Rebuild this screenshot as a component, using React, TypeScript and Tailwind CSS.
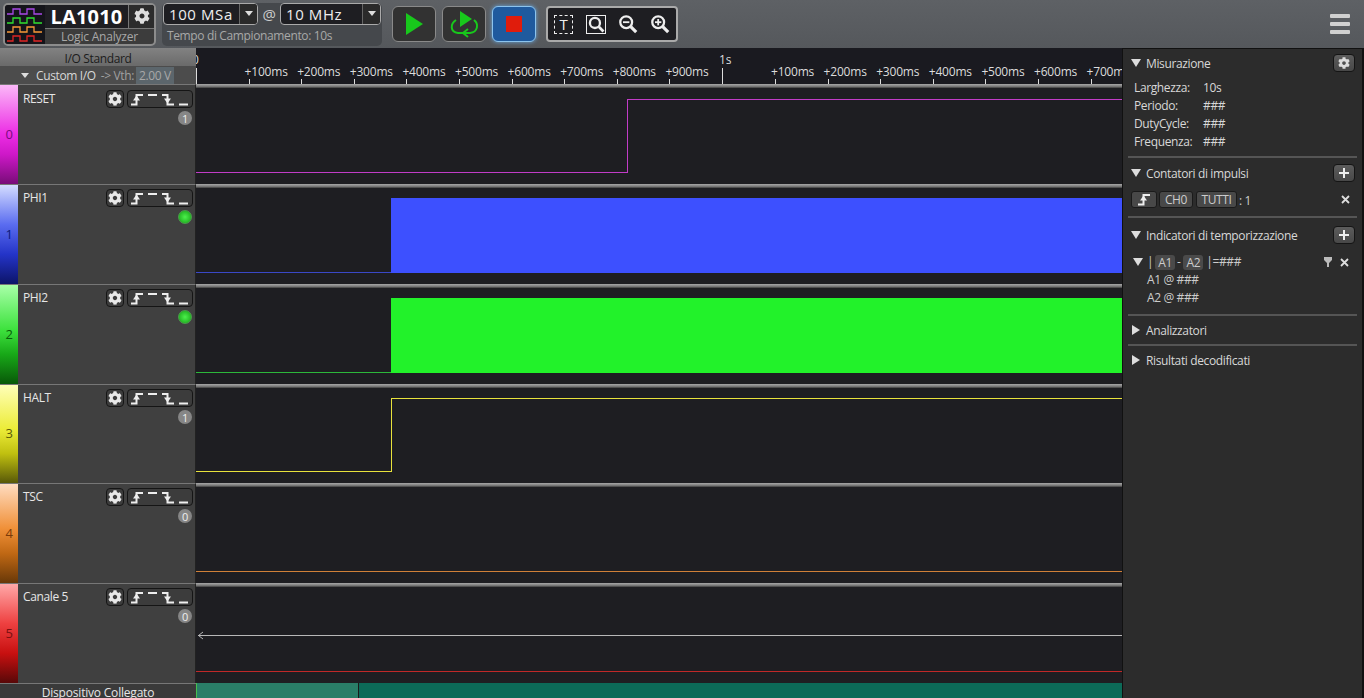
import { FaCog } from "react-icons/fa";

const ticks = [
  { x: 52.6, label: "+100ms" },
  { x: 105.2, label: "+200ms" },
  { x: 157.8, label: "+300ms" },
  { x: 210.4, label: "+400ms" },
  { x: 263, label: "+500ms" },
  { x: 315.6, label: "+600ms" },
  { x: 368.2, label: "+700ms" },
  { x: 420.8, label: "+800ms" },
  { x: 473.4, label: "+900ms" },
  { x: 579, label: "+100ms" },
  { x: 631.6, label: "+200ms" },
  { x: 684.2, label: "+300ms" },
  { x: 736.8, label: "+400ms" },
  { x: 789.4, label: "+500ms" },
  { x: 842, label: "+600ms" },
  { x: 894.6, label: "+700ms" },
];

const channels = [
  { id: 0, name: "RESET", status: "1", h: "h-[100px]", pad: "pt-[5px]", strip: "bg-[linear-gradient(#fbb8f8,#ec2ce4_50%,#ce18c8_70%,#780c78)]", num: "text-[#7a0a80]" },
  { id: 1, name: "PHI1", status: "led", h: "h-[100px]", pad: "pt-[4px]", strip: "bg-[linear-gradient(#d4dcff,#5a6cf0_40%,#2434c8_70%,#0c1468)]", num: "text-[#0c1a78]" },
  { id: 2, name: "PHI2", status: "led", h: "h-[100px]", pad: "pt-[4px]", strip: "bg-[linear-gradient(#a8ffa8,#3ee23e_45%,#18a818_70%,#085808)]", num: "text-[#086008]" },
  { id: 3, name: "HALT", status: "1", h: "h-[99px]", pad: "pt-[4px]", strip: "bg-[linear-gradient(#ffffb8,#ecec38_45%,#c0c010_70%,#585808)]", num: "text-[#5a5a08]" },
  { id: 4, name: "TSC", status: "0", h: "h-[100px]", pad: "pt-[4px]", strip: "bg-[linear-gradient(#ffdcc0,#f09038_45%,#c06814_70%,#683808)]", num: "text-[#7a3a08]" },
  { id: 5, name: "Canale 5", status: "0", h: "h-[100px]", pad: "pt-[4px]", strip: "bg-[linear-gradient(#ffa8a8,#ee4040_40%,#c81010_70%,#580808)]", num: "text-[#7a1010]" },
];

// waveforms are drawn as 1px rects so each segment lands on whole pixels
function Wave({ id }: { id: number }) {
  return (
    <svg width="926" height="96" className="block" shapeRendering="crispEdges">
      {id === 0 && (
        <g fill="#c23cc8">
          <rect x="0" y="84" width="431" height="1" />
          <rect x="431" y="11" width="1" height="74" />
          <rect x="431" y="11" width="495" height="1" />
        </g>
      )}
      {id === 1 && (
        <>
          <rect x="0" y="84" width="195" height="1" fill="#3a48c8" />
          <rect x="195" y="10" width="731" height="75" fill="#3d50ff" />
        </>
      )}
      {id === 2 && (
        <>
          <rect x="0" y="84" width="195" height="1" fill="#2cb83a" />
          <rect x="195" y="10" width="731" height="75" fill="#22f22a" />
        </>
      )}
      {id === 3 && (
        <g fill="#e8e23c">
          <rect x="0" y="83" width="195" height="1" />
          <rect x="195" y="10" width="1" height="74" />
          <rect x="195" y="10" width="731" height="1" />
        </g>
      )}
      {id === 4 && <rect x="0" y="84" width="926" height="1" fill="#d08038" />}
      {id === 5 && (
        <>
          <rect x="2" y="48" width="924" height="1" fill="#b8b8b8" />
          <path d="M7 45L2.500 48.500L7 52" fill="none" stroke="#b8b8b8" shapeRendering="auto" />
          <rect x="0" y="84" width="926" height="1" fill="#c02828" />
        </>
      )}
    </svg>
  );
}

function EdgeUp() {
  return (
    <svg width="12" height="13" viewBox="0 0 12 13" fill="none" stroke="#eee" strokeWidth="2">
      <path d="M0 11.500H5.500V2H12" />
      <path d="M2 7.500L5.500 2.500L9 7.500Z" fill="#eee" stroke="none" />
    </svg>
  );
}

function EdgeDown() {
  return (
    <svg width="12" height="13" viewBox="0 0 12 13" fill="none" stroke="#eee" strokeWidth="2">
      <path d="M0 2H5.500V11.500H12" />
      <path d="M2 5.500L5.500 10.500L9 5.500Z" fill="#eee" stroke="none" />
    </svg>
  );
}

function TriggerGroup() {
  return (
    <div className="flex h-[18px] w-[66px] items-center justify-between rounded-[4px] border border-[#151515] bg-[#3c3c3c] px-[3px]">
      <EdgeUp />
      <svg width="11" height="13" viewBox="0 0 11 13"><path d="M1 2H10" stroke="#eee" strokeWidth="2" /></svg>
      <EdgeDown />
      <svg width="11" height="13" viewBox="0 0 11 13"><path d="M1 11.500H10" stroke="#eee" strokeWidth="2" /></svg>
    </div>
  );
}

function ChannelRow({ ch }: { ch: (typeof channels)[number] }) {
  return (
    <div className={`flex ${ch.h}`}>
      <div className={`flex w-[18px] items-center justify-center border-t border-[#777] text-[13px] ${ch.strip} ${ch.num}`}>
        {ch.id}
      </div>
      <div className={`w-[178px] border-t border-r border-t-[#777] border-r-[#222] bg-[#404040] pr-[2px] pl-[5px] ${ch.pad}`}>
        <div className="flex h-[18px] items-center">
          <span className="flex-1 text-[12px] text-[#e6e6e6]">{ch.name}</span>
          <div className="mr-[3px] flex h-[18px] w-[18px] items-center justify-center rounded-[4px] border border-[#151515] bg-[#3c3c3c]">
            <FaCog className="text-[14px] text-[#e8e8e8]" />
          </div>
          <TriggerGroup />
        </div>
        <div className="mt-[3px] flex justify-end pr-[1px]">
          {ch.status === "led" ? (
            <div className="h-[14px] w-[14px] rounded-full border border-[#4c9a4c] bg-[radial-gradient(#4cf04c,#14a014)]" />
          ) : (
            <div className="flex h-[14px] w-[14px] items-center justify-center rounded-full bg-[#868686] text-[11px] leading-none text-[#eee]">
              {ch.status}
            </div>
          )}
        </div>
      </div>
      <div className="flex w-[926px] flex-col bg-[#1e1e22]">
        <div className="h-[4px] shrink-0 bg-[linear-gradient(#a8a8a8,#7a7a7a_60%,#3c3c3c)]" />
        <Wave id={ch.id} />
      </div>
    </div>
  );
}

function Ruler() {
  return (
    <div className="relative h-[36px] w-[926px] overflow-hidden bg-[#1a1a20] text-[12px] leading-none tracking-[-0.2px] text-[#dcdcdc]">
      <span className="absolute top-[6px] -left-[4px]">0</span>
      <div className="absolute top-[20px] left-0 h-[16px] w-px bg-[#ddd]" />
      <span className="absolute top-[6px] left-[523px]">1s</span>
      <div className="absolute top-[20px] left-[526px] h-[16px] w-px bg-[#ddd]" />
      {ticks.map((t) => (
        <div key={t.x}>
          <span className="absolute top-[18px] whitespace-nowrap" style={{ left: t.x - 4 }}>{t.label}</span>
          <div className="absolute top-[31px] h-[5px] w-px bg-[#ddd]" style={{ left: t.x }} />
        </div>
      ))}
    </div>
  );
}

function Logo() {
  return (
    <svg width="40" height="40" viewBox="0 0 40 40" className="bg-[#14141a]">
      <path d="M2 9H8V4H15V9H22V4H29V9H37" fill="none" stroke="#a848e8" strokeWidth="1.300" />
      <path d="M2 18H8V13H15V18H22V13H29V18H37" fill="none" stroke="#30e030" strokeWidth="1.300" />
      <path d="M2 27H8V22H15V27H22V22H29V27H37" fill="none" stroke="#f89838" strokeWidth="1.300" />
      <path d="M2 36H8V31H15V36H22V31H29V36H37" fill="none" stroke="#e02424" strokeWidth="1.300" />
    </svg>
  );
}

function Caret() {
  return <div className="h-0 w-0 border-x-[4px] border-t-[5px] border-x-transparent border-t-[#ddd]" />;
}

function SelectBox({ value, w }: { value: string; w: string }) {
  return (
    <div className={`flex h-[22px] ${w} overflow-hidden rounded-[4px] border border-[#aaa] bg-[#1e1e22]`}>
      <span className="flex-1 pl-[5px] text-[15px] leading-[20px] tracking-[0.6px] text-[#eee]">{value}</span>
      <div className="flex w-[18px] items-center justify-center border-l border-[#666] bg-[#2a2a2a]">
        <Caret />
      </div>
    </div>
  );
}

function ToolButton({ children, blue }: { children: React.ReactNode; blue?: boolean }) {
  return (
    <div
      className={
        blue
          ? "flex h-[36px] w-[44px] items-center justify-center rounded-[6px] border border-[#8cc4ee] bg-[#1f5a9e] shadow-[0_0_4px_#6aa8e0]"
          : "flex h-[36px] w-[44px] items-center justify-center rounded-[6px] border border-[#8a8a8a] bg-[#323232]"
      }
    >
      {children}
    </div>
  );
}

function Lens({ kind }: { kind: "minus" | "plus" }) {
  return (
    <svg width="20" height="20" viewBox="0 0 22 22" fill="none" stroke="#eee">
      <circle cx="9" cy="9" r="6.500" strokeWidth="2.500" />
      <path d="M14 14L20 20" strokeWidth="3.500" />
      <path d="M5.500 9H12.500" strokeWidth="2" />
      {kind === "plus" && <path d="M9 5.500V12.500" strokeWidth="2" />}
    </svg>
  );
}

function Toolbar() {
  return (
    <div className="flex h-[48px] shrink-0 items-center bg-[linear-gradient(#5e6165,#55585c)]">
      <div className="ml-[3px] flex h-[43px] w-[153px] overflow-hidden rounded-[5px] border-2 border-[#8c8c8c] bg-[#3c3c3c]">
        <div className="w-[40px] border-r border-[#8c8c8c]">
          <Logo />
        </div>
        <div className="flex flex-1 flex-col">
          <div className="flex h-[24px] border-b border-[#777] bg-[#1e1e22]">
            <span className="flex-1 text-center text-[20px] leading-[24px] font-bold tracking-[0.2px] text-white">LA1010</span>
            <div className="flex w-[26px] items-center justify-center border-l border-[#777] bg-[#2c2c2c]">
              <FaCog className="text-[16px] text-[#ddd]" />
            </div>
          </div>
          <span className="text-center text-[12px] leading-[15px] tracking-[-0.2px] text-[#a8a8a8]">Logic Analyzer</span>
        </div>
      </div>
      <div className="ml-[6px] h-[43px] w-[220px] rounded-[5px] bg-[#45484c]">
        <div className="flex items-center pl-[1px]">
          <SelectBox value="100 MSa" w="w-[95px]" />
          <span className="w-[22px] text-center text-[15px] leading-[22px] text-[#ccc]">@</span>
          <SelectBox value="10 MHz" w="w-[101px]" />
        </div>
        <div className="pl-[5px] text-[12px] leading-[21px] text-[#a8a8a8]">Tempo di Campionamento: 10s</div>
      </div>
      <div className="ml-[10px] flex gap-[6px]">
        <ToolButton>
          <svg width="20" height="24" viewBox="0 0 20 24"><path d="M2 1L19 12L2 23Z" fill="#18c81c" /></svg>
        </ToolButton>
        <ToolButton>
          <svg width="32" height="30" viewBox="0 0 32 30" fill="none">
            <path d="M12 2L24 10L12 18Z" fill="#18c81c" />
            <path d="M8 11C2 15 2 23 10 24H22C30 23 31 15 26 11" stroke="#18c81c" strokeWidth="2" />
            <path d="M20 20L15 24L20 28" stroke="#18c81c" strokeWidth="2" />
          </svg>
        </ToolButton>
        <ToolButton blue>
          <div className="h-[16px] w-[16px] bg-[#e01c0c]" />
        </ToolButton>
      </div>
      <div className="ml-[10px] flex h-[36px] w-[132px] items-center gap-[12px] rounded-[4px] border-2 border-[#aaa] bg-[#1e1e22] pl-[6px]">
        <div className="mr-[1px] flex h-[19px] w-[19px] items-center justify-center border border-dashed border-[#eee] text-[15px] leading-none text-[#eee]">T</div>
        <div className="flex h-[19px] w-[20px] items-center justify-center border border-[#eee]">
          <svg width="17" height="17" viewBox="0 0 22 22" fill="none" stroke="#eee">
            <circle cx="9" cy="9" r="6.500" strokeWidth="3" />
            <path d="M14 14L20 20" strokeWidth="3.500" />
          </svg>
        </div>
        <Lens kind="minus" />
        <Lens kind="plus" />
      </div>
      <div className="mr-[14px] ml-auto flex flex-col gap-[4px]">
        <div className="h-[4px] w-[20px] rounded-[1px] bg-[#d0d0d0]" />
        <div className="h-[4px] w-[20px] rounded-[1px] bg-[#d0d0d0]" />
        <div className="h-[4px] w-[20px] rounded-[1px] bg-[#d0d0d0]" />
      </div>
    </div>
  );
}

function IconBtn({ children }: { children: React.ReactNode }) {
  return (
    <div className="mr-[2px] flex h-[18px] w-[22px] items-center justify-center rounded-[4px] border border-[#151515] bg-[linear-gradient(#5c5c5c,#484848)]">
      {children}
    </div>
  );
}

function Plus() {
  return (
    <IconBtn>
      <svg width="12" height="12" viewBox="0 0 12 12"><path d="M6 1V11M1 6H11" stroke="#eee" strokeWidth="2" /></svg>
    </IconBtn>
  );
}

function Cross() {
  return (
    <svg width="9" height="9" viewBox="0 0 9 9"><path d="M1 1L8 8M8 1L1 8" stroke="#ddd" strokeWidth="1.800" /></svg>
  );
}

function Section({ open, title, action }: { open?: boolean; title: string; action?: React.ReactNode }) {
  return (
    <div className="flex h-[18px] items-center">
      <div
        className={
          open
            ? "mr-[5px] ml-[3px] h-0 w-0 border-x-[5px] border-t-[8px] border-x-transparent border-t-[#ddd]"
            : "mr-[6px] ml-[4px] h-0 w-0 border-y-[5px] border-l-[8px] border-y-transparent border-l-[#ddd]"
        }
      />
      <span className="flex-1 pt-[2px] text-[12px] text-[#d8d8d8]">{title}</span>
      {action}
    </div>
  );
}

function Chip({ children, w }: { children: React.ReactNode; w: string }) {
  return (
    <span className={`flex h-[17px] ${w} items-center justify-center rounded-[3px] border border-[#1a1a1a] bg-[#484848] text-[12px] text-[#ccc]`}>
      {children}
    </span>
  );
}

function Measure({ label, value }: { label: string; value: string }) {
  return (
    <div className="flex h-[18px] items-center pt-[2px] pl-[6px] text-[12px] text-[#d8d8d8]">
      <span className="w-[69px]">{label}</span>
      <span>{value}</span>
    </div>
  );
}

function SidePanel() {
  return (
    <div className="w-[242px] border-t border-r-2 border-l border-[#111] bg-[#2c2c2c] px-[5px] pt-[5px] tracking-[-0.37px]">
      <Section open title="Misurazione" action={<IconBtn><FaCog className="text-[12px] text-[#ddd]" /></IconBtn>} />
      <div className="mt-[6px]">
        <Measure label="Larghezza:" value="10s" />
        <Measure label="Periodo:" value="###" />
        <Measure label="DutyCycle:" value="###" />
        <Measure label="Frequenza:" value="###" />
      </div>
      <div className="mt-[6px] h-[2px] bg-[#555]" />
      <div className="mt-[6px]">
        <Section open title="Contatori di impulsi" action={<Plus />} />
      </div>
      <div className="mt-[9px] flex h-[17px] items-center gap-[2px] pl-[3px] text-[12px] text-[#ccc]">
        <Chip w="w-[26px]"><EdgeUp /></Chip>
        <Chip w="w-[34px]">CH0</Chip>
        <span className="ml-[1px]"><Chip w="w-[41px]">TUTTI</Chip></span>
        <span className="flex-1 pt-[2px]">: 1</span>
        <span className="mr-[7px]"><Cross /></span>
      </div>
      <div className="mt-[8px] h-[2px] bg-[#555]" />
      <div className="mt-[8px]">
        <Section open title="Indicatori di temporizzazione" action={<Plus />} />
      </div>
      <div className="mt-[9px] flex h-[18px] items-center text-[12px] text-[#ccc]">
        <div className="mr-[4px] ml-[5px] h-0 w-0 border-x-[5px] border-t-[8px] border-x-transparent border-t-[#ddd]" />
        <span>|</span>
        <span className="mx-[2px] rounded-[3px] bg-[#4a4a4a] px-[3px] leading-[15px]">A1</span>
        <span>-</span>
        <span className="mx-[3px] rounded-[3px] bg-[#4a4a4a] px-[3px] leading-[15px]">A2</span>
        <span className="flex-1">|=###</span>
        <svg width="8" height="10" viewBox="0 0 8 10" className="mr-[8px]"><path d="M0 0H8V3L5 6V10H3V6L0 3Z" fill="#bbb" /></svg>
        <span className="mr-[8px]"><Cross /></span>
      </div>
      <div className="pl-[19px] text-[12px] leading-[18px] text-[#ccc]">
        <div>A1 @ ###</div>
        <div>A2 @ ###</div>
      </div>
      <div className="mt-[7px] h-[2px] bg-[#555]" />
      <div className="mt-[5px]"><Section title="Analizzatori" /></div>
      <div className="mt-[5px] h-[2px] bg-[#555]" />
      <div className="mt-[5px]"><Section title="Risultati decodificati" /></div>
    </div>
  );
}

export default function App() {
  return (
    <div className="flex h-[698px] w-[1364px] flex-col overflow-hidden bg-[#2c2c2c] font-['Open_Sans','Liberation_Sans',sans-serif] tracking-[-0.37px]">
      <Toolbar />
      <div className="flex flex-1">
        <div className="w-[1122px]">
          <div className="flex">
            <div className="w-[196px]">
              <div className="h-[18px] bg-[linear-gradient(#828282,#6a6a6a)] text-center text-[12px] leading-[21px] text-[#1c1c1c]">I/O Standard</div>
              <div className="flex h-[18px] items-center bg-[#4c4c4c] pt-[1px] pl-[21px] text-[12px]">
                <Caret />
                <span className="ml-[7px] text-[#d8d8d8]">Custom I/O</span>
                <span className="ml-[5px] text-[#a0a0a0]">-&gt; Vth:</span>
                <span className="ml-[2px] bg-[#5c666c] px-[3px] leading-[17px] text-[#a8a8a8]">2.00 V</span>
              </div>
            </div>
            <Ruler />
          </div>
          {channels.map((ch) => (
            <ChannelRow key={ch.id} ch={ch} />
          ))}
          <div className="flex h-[15px]">
            <div className="w-[196px] border-t border-[#777] bg-[#3a3a3a] text-center text-[12px] leading-[17px] tracking-[-0.2px] text-[#e6e6e6]">Dispositivo Collegato</div>
            <div className="w-[162px] border-l border-[#46c050] bg-[#2a7e68]" />
            <div className="flex-1 border-l border-[#1a1a1a] bg-[#0c6a58]" />
          </div>
        </div>
        <SidePanel />
      </div>
    </div>
  );
}
